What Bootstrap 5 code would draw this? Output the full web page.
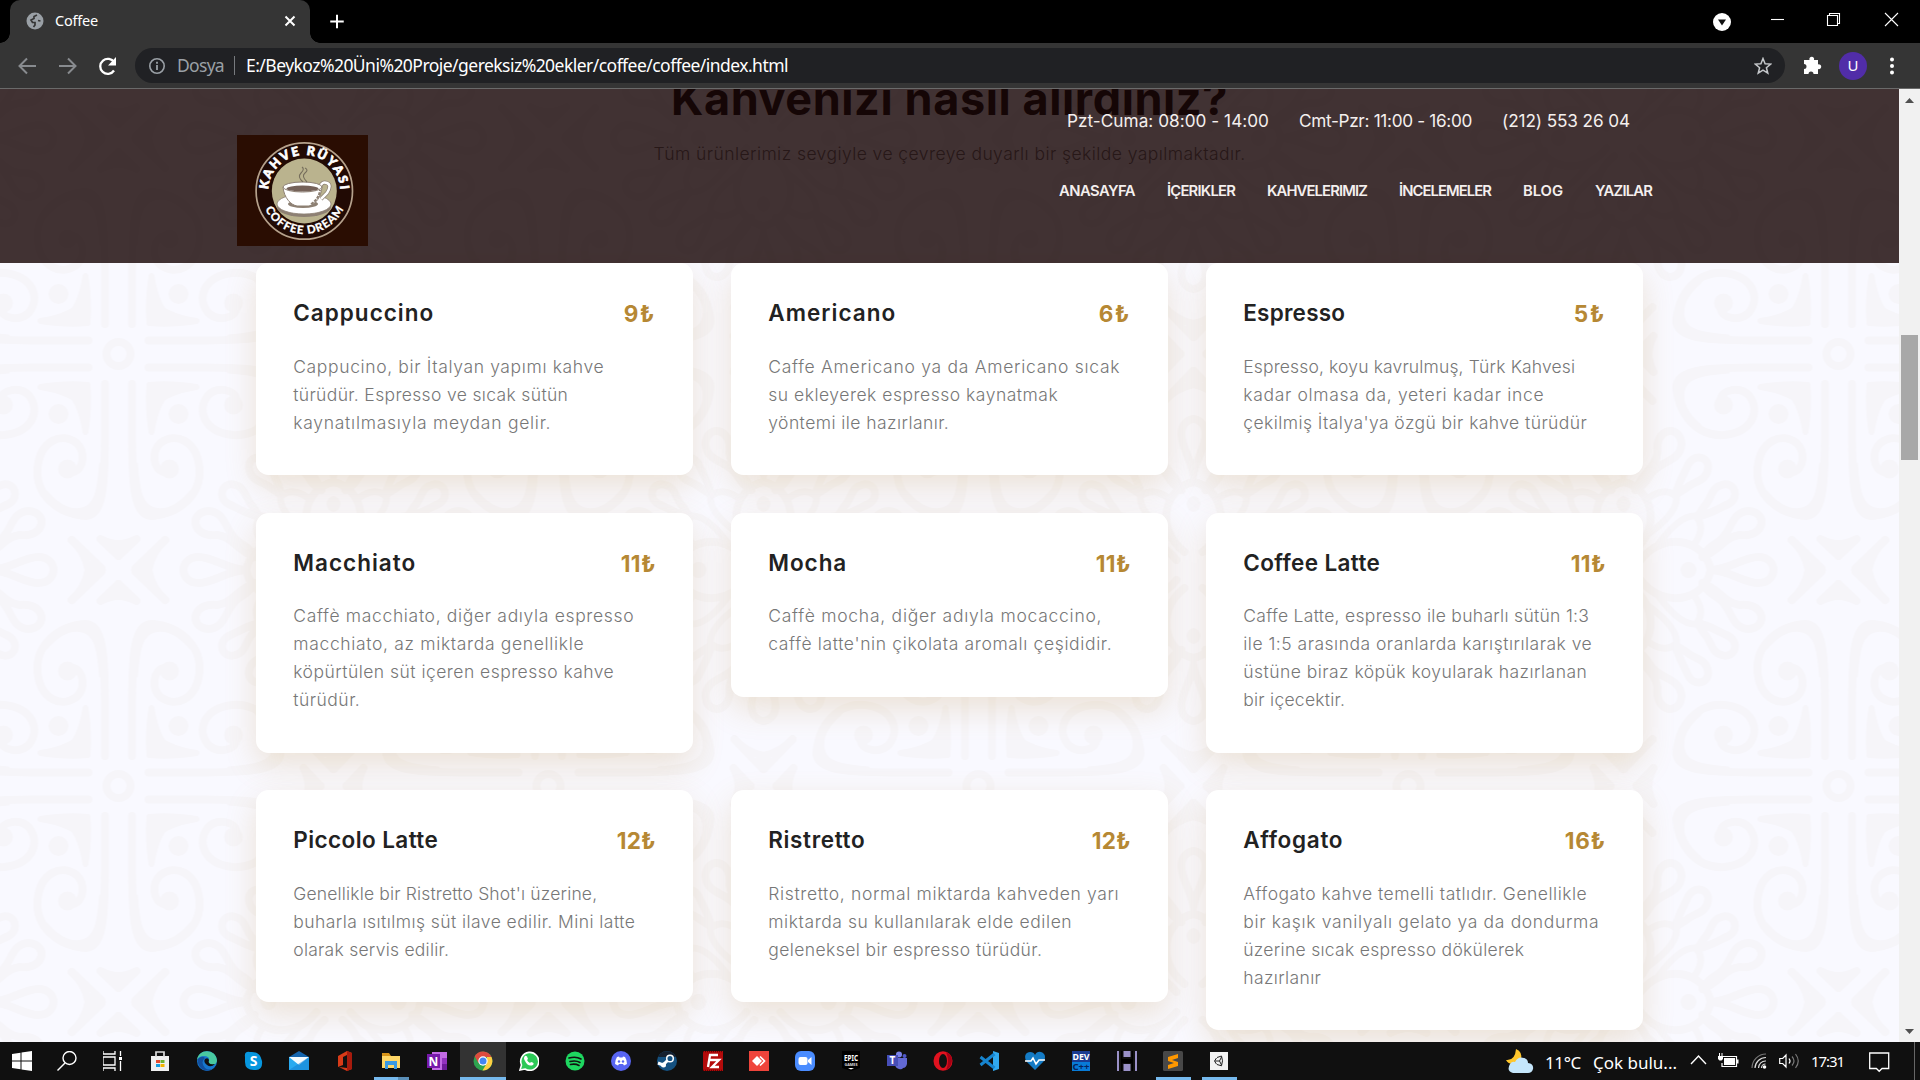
<!DOCTYPE html>
<html lang="tr">
<head>
<meta charset="utf-8">
<meta name="viewport" content="width=device-width, initial-scale=1">
<title>Coffee</title>
<link href="https://cdn.jsdelivr.net/npm/bootstrap@5.3.0/dist/css/bootstrap.min.css" rel="stylesheet">
<style>
body{width:1920px;height:1080px;overflow:hidden;background:#000;font-family:Inter,"Liberation Sans",sans-serif}
svg{display:block;flex:none}
.ui{font-family:"Noto Sans","Open Sans",sans-serif}
[data-w]{white-space:nowrap}
/* browser frame */
.tabstrip{height:43px;background:#000;padding-left:10px}
.tab-item{width:300px;height:43px;background:#353535;border-radius:10px 10px 0 0;padding:0 13px 2px 16px;position:relative}
.tab-item::before,.tab-item::after{content:"";position:absolute;bottom:0;width:10px;height:10px}
.tab-item::before{left:-10px;background:radial-gradient(circle at 0 0,#000 9.5px,#353535 10px)}
.tab-item::after{right:-10px;background:radial-gradient(circle at 100% 0,#000 9.5px,#353535 10px)}
.tab-name{font-size:14.5px;color:#fff;width:43px;margin-left:11px}
.toolbar{height:46px;background:#353535;border-bottom:1px solid #6a6a6a;padding:0 0 0 16px}
.address{width:1650px;height:35px;border-radius:18px;background:#202124;margin-left:18px;padding:0 13px 0 13px;font-size:17.5px}
.address .scheme{color:#9aa0a6;width:46px;margin-left:11px}
.address .bar{width:1px;height:19px;background:#777a7e;margin:0 11px 0 10px}
.avatar{width:28px;height:28px;border-radius:50%;background:#512da8;color:#fff;font-size:15px}
/* page viewport */
.viewport{height:953px}
.page{width:1899px;height:953px;background:#f9f9ff;position:relative;overflow:hidden}
.motif{position:absolute;left:0;top:0}
.site-header{position:absolute;left:0;top:0;width:100%;height:174px;background:rgba(19,0,0,.8);padding:0 237px;color:#f4efee}
.topline{font-size:17.2px;gap:30px;padding-right:32px;height:29px;margin-top:17px}
.menu-row{font-size:14.8px;font-weight:600;gap:32px;height:28px;margin-top:42px;padding-right:10px}
.logo{margin-top:46px}
.intro{position:relative;height:174px;padding-top:1px;text-align:center}
.intro h1{font-size:45px;font-weight:700;line-height:50px;color:#222;margin:-16px 0 0}
.intro p{font-size:17.5px;font-weight:300;line-height:28px;color:#777;margin:16px 0 0}
.menu-grid{position:relative;width:1425px;margin:0 auto;--bs-gutter-x:37.5px}
.drink{background:#fff;border-radius:12.5px;padding:37px 37.5px 38.5px;margin-bottom:37.5px;box-shadow:0 12px 32px rgba(184,134,52,.2)}
.drink .top{height:26.5px;margin-bottom:26px;color:#222}
.drink h4{font-size:22.5px;font-weight:600;line-height:26px;margin:0}
.drink .price{font-size:22.5px;font-weight:700;color:#b68834;line-height:27px}
.drink p{font-size:17.5px;font-weight:300;line-height:28px;color:#777;margin:0}
.drink p span{display:table}
.scroller{width:21px;background:#f1f1f1;padding:9px 0 8px}
.scroller .thumb{width:17px;height:125px;background:#a8a8a8;margin:0 auto}
/* taskbar */
.taskbar{height:38px;background:#101010;color:#fff}
.tb{width:46px;height:38px;position:relative}
.tb.sys{width:44px}
.tb.current{background:#333}
.tb.open::after,.tb.current::after{content:"";position:absolute;left:6px;bottom:0;width:35px;height:3px;background:#76b9ed}
.tb.current::after{left:0;width:46px}
.tb.multi::after{background:linear-gradient(90deg,#76b9ed 24px,#5a8fb8 24px)}
.tray{height:38px}
.tray span{font-size:17px}
.tray .clock{font-size:15px}
</style>
<script src="https://cdn.jsdelivr.net/npm/bootstrap@5.3.0/dist/js/bootstrap.bundle.min.js"></script>
</head>
<body class="d-flex flex-column">

<header class="ui flex-shrink-0">
  <div class="tabstrip d-flex align-items-center">
    <div class="tab-item d-flex align-items-center">
      <svg width="18" height="18" viewBox="0 0 18 18"><circle cx="9" cy="9" r="8.500" fill="#9aa0a6"/><path d="M11 3L8 4.500v2L5 8l1.500 2.500H9V13l-1.500 2M12 8.500l2.500.5" fill="none" stroke="#353535" stroke-width="1.700"/></svg>
      <span class="tab-name" data-w="43">Coffee</span>
      <svg class="ms-auto" width="14" height="14" viewBox="0 0 14 14"><path d="M2.500 2.500l9 9m0-9l-9 9" stroke="#fff" stroke-width="2"/></svg>
    </div>
    <svg class="ms-3" width="20" height="20" viewBox="0 0 20 20" style="padding-left:2px;margin-top:-1px;overflow:visible"><path d="M10 3v15M2.500 10.500h15" stroke="#fff" stroke-width="2.200"/></svg>
    <div class="ms-auto d-flex align-items-center">
      <svg width="18" height="18" viewBox="0 0 18 18" style="margin:0 40px 0 0"><circle cx="9" cy="9" r="9" fill="#fff"/><path d="M5 6.500h8l-4 6z" fill="#111"/></svg>
      <svg width="128" height="16" viewBox="0 0 128 16" style="margin:-6px 21px 0 0"><g fill="none" stroke="#fff" stroke-width="1.100"><path d="M0 8.500h13"/><path d="M56.500 4.500h10v10h-10zM58.500 4.500v-2h10v10h-2"/><path d="M114 2l13 13m0-13l-13 13"/></g></svg>
    </div>
  </div>
  <div class="toolbar d-flex align-items-center">
    <svg width="101" height="24" viewBox="0 0 101 24"><g fill="none" stroke="#888b8f" stroke-width="2"><path d="M20 12H4M11 4.500L3.500 12l7.500 7.500M43 12h16M52 4.500l7.500 7.500-7.500 7.500"/><path d="M98 16.500a7.500 7.500 0 1 1 .2-8" stroke="#fff" stroke-width="2.300"/></g><path d="M100 3v8.500h-8z" fill="#fff"/></svg>
    <div class="address d-flex align-items-center">
      <svg width="18" height="18" viewBox="0 0 18 18"><circle cx="9" cy="9" r="7.200" fill="none" stroke="#9aa0a6" stroke-width="1.600"/><path d="M9 8v5M9 4.800v2" stroke="#9aa0a6" stroke-width="1.800"/></svg>
      <span class="scheme" data-w="47">Dosya</span><span class="bar"></span>
      <span class="text-white" data-w="542">E:/Beykoz%20Üni%20Proje/gereksiz%20ekler/coffee/coffee/index.html</span>
      <svg class="ms-auto" width="18" height="18" viewBox="0 0 18 18"><path d="M9 1.500l2.100 5.200 5.600.4-4.300 3.600 1.400 5.500L9 13.200l-4.800 3 1.400-5.500L1.300 7.100l5.600-.4z" fill="none" stroke="#c4c7ca" stroke-width="1.500"/></svg>
    </div>
    <svg width="19" height="19" viewBox="0 0 19 19" style="margin-left:18px"><path d="M1 4h5.500a2.400 2.400 0 1 1 4.500 0H15v4.500a2.400 2.400 0 1 1 0 4.500v5h-4.500a2.500 2.500 0 0 0-5 0H1v-5a2.500 2.500 0 0 0 0-5z" fill="#fff"/></svg>
    <div class="avatar d-flex align-items-center justify-content-center" style="margin-left:17px">U</div>
    <svg width="6" height="18" viewBox="0 0 6 18" style="margin-left:22px"><g fill="#fff"><circle cx="3" cy="2.500" r="2"/><circle cx="3" cy="9" r="2"/><circle cx="3" cy="15.500" r="2"/></g></svg>
  </div>
</header>

<main class="viewport d-flex flex-shrink-0">
  <div class="page">
    <svg class="motif" width="1899" height="953">
      <defs>
        <g id="oct" fill="none" stroke="#f6f5f9" stroke-linecap="round" stroke-linejoin="round">
          <path d="M13.500 30V80C14 120 13 162 33 162C62 160 83 140 81 114C78 86 57 78 42 89C32 98 35 117 46 118" stroke-width="8"/>
          <path d="M15 110C14 158 25 168 40 163C55 159 66 150 72 138C60 152 48 158 36 155C24 152 20 140 18 110" fill="#f6f5f9" stroke-width="3"/>
          <circle cx="51" cy="115" r="9.500" fill="#f6f5f9" stroke="none"/>
          <path d="M33 78Q29 52 31 31L55 32Q38 45 33 78z" fill="#f6f5f9" stroke-width="6"/>
          <path d="M12 216L48 186Q20 203 31 216z" fill="#f6f5f9" stroke="none"/>
          <path d="M47 186Q33 198 30 216" stroke-width="8"/><path d="M46 185L16 214" stroke-width="6"/>
          <path d="M0 202L18 185Q8 190 0 190z" fill="#f6f5f9" stroke-width="8"/>
          <path d="M128 216C110 216 95 229 80 229C60 229 60 203 80 203C95 203 110 216 128 216" stroke-width="8"/>
          <path d="M136 203C118 196 114 183 99 181C73 184 70 158 90 157C109 158 106 180 122 189Q131 194 136 203" stroke-width="8"/>
          <path d="M141 163C128 160 119 154 110 150C98 143 104 127 117 131C128 134 127 145 134 152L141 163" stroke-width="8"/>
          <path d="M144 190C134 176 138 168 142 162Q158 160 180 190" stroke-width="7"/>
          <path d="M128 216C132 187 174 175 198 206" stroke-width="8"/><circle cx="150" cy="216" r="8" fill="#f6f5f9" stroke="none"/>
        </g>
        <g id="quarter"><use href="#oct"/><use href="#oct" transform="matrix(0 1 1 0 0 0)"/><circle cx="60" cy="60" r="10" fill="#f6f5f9"/></g>
        <g id="tile"><use href="#quarter"/><use href="#quarter" transform="scale(-1 1)"/><use href="#quarter" transform="scale(1 -1)"/><use href="#quarter" transform="scale(-1 -1)"/><circle r="12" fill="none" stroke="#f6f5f9" stroke-width="8"/></g>
        <pattern id="ornament" width="430" height="432" patternUnits="userSpaceOnUse" x="-96.500" y="49"><use href="#tile" transform="translate(215 216)"/></pattern>
      </defs>
      <rect width="1899" height="953" fill="url(#ornament)"/>
    </svg>

    <div class="intro"><h1><span data-w="557">Kahvenizi nasıl alırdınız?</span></h1><p><span data-w="592">Tüm ürünlerimiz sevgiyle ve çevreye duyarlı bir şekilde yapılmaktadır.</span></p></div>

    <div class="menu-grid row">
      <div class="col-4">
        <div class="drink"><div class="top d-flex justify-content-between"><h4><span data-w="141">Cappuccino</span></h4><span class="price" data-w="32">9₺</span></div>
          <p><span data-w="311">Cappucino, bir İtalyan yapımı kahve</span><span data-w="275">türüdür. Espresso ve sıcak sütün</span><span data-w="258">kaynatılmasıyla meydan gelir.</span></p></div>
        <div class="drink"><div class="top d-flex justify-content-between"><h4><span data-w="123">Macchiato</span></h4><span class="price" data-w="35">11₺</span></div>
          <p><span data-w="341">Caffè macchiato, diğer adıyla espresso</span><span data-w="291">macchiato, az miktarda genellikle</span><span data-w="321">köpürtülen süt içeren espresso kahve</span><span data-w="67">türüdür.</span></p></div>
        <div class="drink"><div class="top d-flex justify-content-between"><h4><span data-w="145">Piccolo Latte</span></h4><span class="price" data-w="39">12₺</span></div>
          <p><span data-w="304">Genellikle bir Ristretto Shot'ı üzerine,</span><span data-w="342">buharla ısıtılmış süt ilave edilir. Mini latte</span><span data-w="156">olarak servis edilir.</span></p></div>
      </div>
      <div class="col-4">
        <div class="drink"><div class="top d-flex justify-content-between"><h4><span data-w="128">Americano</span></h4><span class="price" data-w="32">6₺</span></div>
          <p><span data-w="352">Caffe Americano ya da Americano sıcak</span><span data-w="290">su ekleyerek espresso kaynatmak</span><span data-w="181">yöntemi ile hazırlanır.</span></p></div>
        <div class="drink"><div class="top d-flex justify-content-between"><h4><span data-w="79">Mocha</span></h4><span class="price" data-w="35">11₺</span></div>
          <p><span data-w="334">Caffè mocha, diğer adıyla mocaccino,</span><span data-w="344">caffè latte'nin çikolata aromalı çeşididir.</span></p></div>
        <div style="height:56px"></div>
        <div class="drink"><div class="top d-flex justify-content-between"><h4><span data-w="97">Ristretto</span></h4><span class="price" data-w="39">12₺</span></div>
          <p><span data-w="351">Ristretto, normal miktarda kahveden yarı</span><span data-w="304">miktarda su kullanılarak elde edilen</span><span data-w="274">geleneksel bir espresso türüdür.</span></p></div>
      </div>
      <div class="col-4">
        <div class="drink"><div class="top d-flex justify-content-between"><h4><span data-w="102">Espresso</span></h4><span class="price" data-w="32">5₺</span></div>
          <p><span data-w="332">Espresso, koyu kavrulmuş, Türk Kahvesi</span><span data-w="301">kadar olmasa da, yeteri kadar ince</span><span data-w="344">çekilmiş İtalya'ya özgü bir kahve türüdür</span></p></div>
        <div class="drink"><div class="top d-flex justify-content-between"><h4><span data-w="137">Coffee Latte</span></h4><span class="price" data-w="35">11₺</span></div>
          <p><span data-w="346">Caffe Latte, espresso ile buharlı sütün 1:3</span><span data-w="349">ile 1:5 arasında oranlarda karıştırılarak ve</span><span data-w="344">üstüne biraz köpük koyularak hazırlanan</span><span data-w="102">bir içecektir.</span></p></div>
        <div class="drink"><div class="top d-flex justify-content-between"><h4><span data-w="100">Affogato</span></h4><span class="price" data-w="41">16₺</span></div>
          <p><span data-w="344">Affogato kahve temelli tatlıdır. Genellikle</span><span data-w="356">bir kaşık vanilyalı gelato ya da dondurma</span><span data-w="281">üzerine sıcak espresso dökülerek</span><span data-w="78">hazırlanır</span></p></div>
      </div>
    </div>

    <div class="site-header d-flex justify-content-between">
      <svg class="logo" width="131" height="111" viewBox="0 0 131 111">
        <defs><path id="arcTop" d="M31.300 56a36 36 0 0 1 72 0"/><path id="arcBottom" d="M24.300 56a43 43 0 0 0 86 0"/></defs>
        <rect width="131" height="111" fill="#2a0d02"/>
        <circle cx="67.300" cy="56" r="48.200" fill="#210a04" stroke="#b5a18c" stroke-width="1.700"/>
        <circle cx="67.300" cy="56" r="32.500" fill="#bab38e"/>
        <g font-family="Lato, sans-serif" font-weight="900" fill="#fff" stroke="#fff" text-anchor="middle">
          <text font-size="12.500" stroke-width=".7" textLength="110"><textPath href="#arcTop" startOffset="50%" textLength="110">KAHVE RÜYASI</textPath></text>
          <text font-size="11.500" stroke-width=".2" textLength="98"><textPath href="#arcBottom" startOffset="50%" textLength="98">COFFEE DREAM</textPath></text>
        </g>
        <ellipse cx="67" cy="72" rx="27" ry="10" fill="#8d8073"/><ellipse cx="67" cy="69" rx="27" ry="10" fill="#fff" stroke="#8d8073" stroke-width=".8"/>
        <ellipse cx="66" cy="69" rx="15" ry="4" fill="#8d8073"/>
        <path d="M83 52q2-6 7-4t0 10l-6 6" fill="none" stroke="#8d8073" stroke-width="4"/><path d="M83 52q2-6 7-4t0 10l-6 6" fill="none" stroke="#fff" stroke-width="2.500"/>
        <path d="M46 52c1 11 8 18 14 19h12c7-2 12-9 13-19z" fill="#fff" stroke="#8d8073"/>
        <path d="M74 69q8-5 9-14" fill="none" stroke="#8d8073" stroke-width="2" stroke-dasharray="3 1"/>
        <ellipse cx="65.500" cy="52" rx="19.500" ry="5" fill="#fff" stroke="#8d8073"/><ellipse cx="65.500" cy="53.500" rx="16" ry="3" fill="#756259"/>
        <path d="M66 47q-6-5-2-9t1-6M70 47q-6-6-2-9t0-5" fill="none" stroke="#766e5c" stroke-width="1.100"/>
      </svg>
      <div>
        <div class="topline d-flex justify-content-end align-items-center"><span data-w="202">Pzt-Cuma: 08:00 - 14:00</span><span data-w="173">Cmt-Pzr: 11:00 - 16:00</span><span data-w="128">(212) 553 26 04</span></div>
        <nav class="menu-row d-flex justify-content-end align-items-center"><span data-w="76">ANASAYFA</span><span data-w="68">İÇERIKLER</span><span data-w="100">KAHVELERIMIZ</span><span data-w="92">İNCELEMELER</span><span data-w="40">BLOG</span><span data-w="57">YAZILAR</span></nav>
      </div>
    </div>
  </div>
  <div class="scroller d-flex flex-column">
    <svg class="mx-auto" width="9" height="5" viewBox="0 0 9 5"><path d="M0 5l4.500-5L9 5z" fill="#505050"/></svg>
    <div class="thumb" style="margin-top:232px"></div>
    <svg class="mx-auto mt-auto" width="9" height="5" viewBox="0 0 9 5"><path d="M0 0l4.500 5L9 0z" fill="#505050"/></svg>
  </div>
</main>

<footer class="taskbar ui d-flex flex-shrink-0">
  <div class="d-flex" id="apps">
    <div class="tb sys"><svg viewBox="0 0 20 20"><path d="M0 3l8.500-1.200V9.500H0zM9.500 1.600L20 0v9.500H9.500zM0 10.500h8.500v7.800L0 17zM9.500 10.500H20V20L9.500 18.400z" fill="#fff"/></svg></div>
    <div class="tb"><svg viewBox="0 0 20 20"><g fill="none" stroke="#fff" stroke-width="1.400"><circle cx="12.500" cy="7" r="6.500"/><path d="M8 12L.5 19.500"/></g></svg></div>
    <div class="tb"><svg viewBox="0 0 20 20"><g fill="none" stroke="#fff" stroke-width="1.300"><path d="M0 0v3h12V0M0 6h12v8H0zM0 20v-3h12v3M17.500 0v5M17.500 10v10"/></g><path d="M16 6h3v3h-3z" fill="#fff"/></svg></div>
    <div class="tb" style="width:48px"><svg viewBox="0 0 20 20"><path d="M1 5h18v15H1z" fill="#f0f0f0"/><path d="M6 6V1h8v5" fill="none" stroke="#ddd" stroke-width="1.700"/><path d="M6 9h4v3H6z" fill="#e64a2e"/><path d="M10.500 9h4v3h-4z" fill="#6eb332"/><path d="M6 13h4v3H6z" fill="#159de0"/><path d="M10.500 13h4v3h-4z" fill="#f4b400"/></svg></div>
    <div class="tb"><svg viewBox="0 0 20 20"><circle cx="10" cy="10" r="10" fill="#1677cf"/><path d="M0 9C1-2 18-3 20 9q0 5-6 5-4-1-2-4 1-5-5-5-5 0-7 4z" fill="#49c9a0"/><path d="M1 8q4-4 7-1-5 4 0 10 4 3 9 0-6 5-12 1Q0 14 1 8z" fill="#124f9d"/><path d="M8 8q3-2 4 1-2 5 6 4-4 4-8 1t-2-6z" fill="#111"/></svg></div>
    <div class="tb"><svg viewBox="0 0 20 20"><path d="M2 6Q1 0 7 1q10-1 12 9 1 9-6 9Q2 20 2 11z" fill="#0797df"/><text x="10.500" y="15" text-anchor="middle" font-size="14" font-weight="700" fill="#fff">S</text></svg></div>
    <div class="tb"><svg viewBox="0 0 20 20"><path d="M0 6l10-6 10 6z" fill="#1464ad"/><path d="M0 6h20v13H0z" fill="#29aaf0"/><path d="M0 6h20L10 14z" fill="#f4fbff"/><path d="M0 19L20 6v13z" fill="#147fd3" opacity=".55"/></svg></div>
    <div class="tb"><svg viewBox="0 0 20 20"><path d="M3 5l9-5 5 2v16l-5 2-8-4 8 1V4L8 6v8l-5 2z" fill="#d83b18"/><path d="M12 0l5 2v16l-5 2z" fill="#a71b0d"/></svg></div>
    <div class="tb open multi"><svg viewBox="0 0 20 20"><path d="M1 2h7l2 3H1z" fill="#d79419"/><path d="M1 5h18v12H1z" fill="#ffd767"/><path d="M4 18v-8h12v8h-3v-4H7v4z" fill="#3a9ae3"/></svg></div>
    <div class="tb"><svg viewBox="0 0 20 20"><path d="M5 1h15v18H5z" fill="#c36be5"/><path d="M15 7h5v6h-5z" fill="#9332bf"/><path d="M15 13h5v6h-5z" fill="#6e1b9a"/><path d="M0 3h13v14H0z" fill="#7719aa"/><text x="6.500" y="14.500" text-anchor="middle" font-size="12" font-weight="700" fill="#fff">N</text></svg></div>
    <div class="tb current"><svg viewBox="0 0 20 20"><circle cx="10" cy="10" r="9.500" fill="#2ea44f"/><path d="M1.700 5.200A9.500 9.500 0 0 1 18.500 6H10l-4.500 6z" fill="#dd4b3e"/><path d="M18.500 6A9.500 9.500 0 0 1 9.500 19.500L14 12V6z" fill="#ffce43"/><circle cx="10" cy="10" r="4.700" fill="#fff"/><circle cx="10" cy="10" r="3.500" fill="#4285f4"/></svg></div>
    <div class="tb"><svg viewBox="0 0 20 20"><path d="M1 19l1.500-5A9 9 0 1 1 6 18z" fill="#2cc957" stroke="#fff" stroke-width="1.600"/><path d="M6 5q2-1 3 3l-1 1q1 2 3 3l1-1q4 1 2 3-5 2-8-4-2-3 0-5z" fill="#fff"/></svg></div>
    <div class="tb"><svg viewBox="0 0 20 20"><circle cx="10" cy="10" r="9.500" fill="#1ed760"/><path d="M4 7q7-2 12 1M5 10.500q6-1.500 10 1M5.500 13.500q5-1 8.500 1" fill="none" stroke="#111" stroke-width="1.600" stroke-linecap="round"/></svg></div>
    <div class="tb"><svg viewBox="0 0 20 20"><circle cx="10" cy="10" r="10" fill="#5865f2"/><path d="M6 6l2-.5.500 1h3l.500-1L14 6q2 3 2 7l-3 1.500-1-1.500H8l-1 1.500L4 13q0-4 2-7z" fill="#fff"/><circle cx="8" cy="10.500" r="1.200" fill="#5865f2"/><circle cx="12" cy="10.500" r="1.200" fill="#5865f2"/></svg></div>
    <div class="tb"><svg viewBox="0 0 20 20"><circle cx="10" cy="10" r="10" fill="#155180"/><path d="M1 6A10 10 0 0 1 19 6z" fill="#15202f"/><path d="M1 12l5 2 6-6" stroke="#fff" stroke-width="3" fill="none"/><circle cx="13" cy="7.500" r="3.300" fill="#155180" stroke="#fff" stroke-width="1.500"/><circle cx="6.500" cy="14" r="2.500" fill="#fff"/></svg></div>
    <div class="tb"><svg viewBox="0 0 20 20"><path d="M0 0h20v20H0z" fill="#b40b0b"/><path d="M0 .7h20M0 19.300h20" stroke="#500" stroke-dasharray="1 1"/><path d="M5 16L7 4h8M6 9h6M9 9h7l-7 7h7" fill="none" stroke="#fff" stroke-width="2.300"/></svg></div>
    <div class="tb"><svg viewBox="0 0 20 20"><path d="M0 0h20v20H0z" fill="#ef443b"/><path d="M8 5l5 5-5 5-5-5z" fill="#fff"/><path d="M11 5.500l4.500 4.500-4.500 4.500" fill="none" stroke="#fff" stroke-width="1.700"/></svg></div>
    <div class="tb"><svg viewBox="0 0 20 20"><rect width="20" height="20" rx="6" fill="#4a8cff"/><rect x="3.500" y="6" width="9" height="8" rx="2" fill="#fff"/><path d="M13 9l3.500-3v8L13 11z" fill="#fff"/></svg></div>
    <div class="tb"><svg viewBox="0 0 20 20"><path d="M1 0h18v17l-9 3-9-3z" fill="#000"/><text x="10" y="9.500" text-anchor="middle" font-size="9" textLength="14" lengthAdjust="spacingAndGlyphs" font-weight="700" fill="#fff">EPIC</text><text x="10" y="15" text-anchor="middle" font-size="4" textLength="13" lengthAdjust="spacingAndGlyphs" font-weight="700" fill="#ddd">GAMES</text><path d="M7 17h6l-3 1.500z" fill="#fff"/></svg></div>
    <div class="tb"><svg viewBox="0 0 20 20"><circle cx="12" cy="3.500" r="3" fill="#7b83eb"/><circle cx="17.500" cy="5" r="2" fill="#5059c9"/><path d="M8 7h12v6q-1 4-4 4-1 2-4 1-4-1-4-5z" fill="#6269d4"/><path d="M0 4h11v11H0z" fill="#464eb8"/><text x="5.500" y="13" text-anchor="middle" font-size="10" font-weight="700" fill="#fff">T</text></svg></div>
    <div class="tb"><svg viewBox="0 0 20 20"><ellipse cx="10" cy="10" rx="9.500" ry="9.800" fill="#e1121f"/><path d="M13 1q6 2 6 9-1 7-6 9 4-9 0-18z" fill="#a70014"/><ellipse cx="10" cy="10" rx="4" ry="7" fill="#111"/></svg></div>
    <div class="tb"><svg viewBox="0 0 20 20"><path d="M14 0l6 2v16l-6 2z" fill="#31a8ee"/><path d="M15.500 3L1.500 14M15.500 17L1.500 6" stroke="#1684cf" stroke-width="3"/></svg></div>
    <div class="tb"><svg viewBox="0 0 20 20"><path d="M10 19L1 10Q-2 2 5 1q4 0 5 3 2-4 6-3 6 2 3 9z" fill="#147bc5"/><path d="M0 10h6l2-3 3 6 3-4h6" fill="none" stroke="#fff" stroke-width="1.600"/></svg></div>
    <div class="tb"><svg viewBox="0 0 20 20"><path d="M1 0h18v20H1z" fill="#193c91"/><path d="M1 11h18v9H1z" fill="#087bd7"/><text x="10" y="9" text-anchor="middle" font-size="8.500" textLength="17" lengthAdjust="spacingAndGlyphs" font-weight="700" fill="#fff">DEV</text><text x="10" y="18.500" text-anchor="middle" font-size="9" textLength="17" lengthAdjust="spacingAndGlyphs" font-weight="700" fill="#06245c">C++</text></svg></div>
    <div class="tb"><svg viewBox="0 0 20 20"><path d="M0 0h2v20H0zM18 0h2v20h-2zM6.500 0h7v6h-7zM6.500 13h7v7h-7z" fill="#9a91c8"/><path d="M4 0h1.500v8h9V0H16v20h-1.500v-8h-9v8H4z" fill="#000"/></svg></div>
    <div class="tb open"><svg viewBox="0 0 20 20"><rect width="20" height="20" rx="1.500" fill="#484848"/><path d="M15 3v4l-6 2 6 2v4l-10 3v-4l6-2-6-2V6z" fill="#ff9800"/></svg></div>
    <div class="tb open"><svg viewBox="0 0 20 20"><path d="M1 1h18v18H1z" fill="#f2f2f2"/><path d="M8 6.500l4.500-1.500 1 4.800-1 5L8 13.500M7.500 7L5.500 10l2 3.200M6 10h4.500l2-4M10.500 10l2 4" fill="none" stroke="#222" stroke-width="1"/></svg></div>
  </div>
  <div class="tray d-flex align-items-center ms-auto">
    <svg width="28" height="25" viewBox="0 0 28 25"><path d="M10 0q7 3 5 11L7 15q-5 0-7-4 9 1 10-11z" fill="#ffc62b"/><path d="M7 24q-7-2-3-9 2-3 5-2 3-6 9-4 4 1 4 5 6 1 5 6-1 4-5 4z" fill="#c5e6fb"/></svg>
    <span data-w="36" style="margin-left:11px;padding-top:3px">11°C</span><span data-w="84" style="margin-left:12px;padding-top:3px">Çok bulu...</span>
    <svg width="17" height="12" viewBox="0 0 17 12" style="margin:-3px 0 0 13px"><path d="M1 10l7.500-8L16 10" fill="none" stroke="#fff" stroke-width="1.400"/></svg>
    <svg width="21" height="16" viewBox="0 0 21 16" style="margin:-1px 0 0 11px"><path d="M4 3.500h14.500v10H4V10" fill="none" stroke="#fff" stroke-width="1.200"/><path d="M6 5h11v7H6zM18.500 6.500h2v4h-2zM0 3h5v3L3.500 7.500h-2L0 6zM1 0h1v3H1zM3.500 0h1v3h-1z" fill="#fff"/></svg>
    <svg width="16" height="16" viewBox="0 0 16 16" style="margin-left:12px"><g fill="none" stroke-width="1.200"><path d="M1 15A14 14 0 0 1 15 1" stroke="#777"/><path d="M4 15A11 11 0 0 1 15 4.500M7.500 15a7 7 0 0 1 7.500-7M10.500 15a4 4 0 0 1 4-4" stroke="#ddd"/></g><circle cx="13.500" cy="14" r="1.800" fill="#fff"/></svg>
    <svg width="21" height="16" viewBox="0 0 21 16" style="margin-left:12px"><path d="M.7 5.500h3L7 2v12l-3.300-3.500h-3zM10 5.500q2 2.500 0 5" fill="none" stroke="#fff" stroke-width="1.200"/><path d="M13 3.500q4 4.500 0 9M16.500 1q5.500 7 0 14" fill="none" stroke="#777" stroke-width="1.200"/></svg>
    <span class="clock" data-w="33" style="margin-left:11px">17:31</span>
    <svg width="21" height="21" viewBox="0 0 21 21" style="margin:3px 0 0 25px"><path d="M.7 1h19v15.500H13l-2.800 2.800-2.800-2.800H.7z" fill="none" stroke="#fff" stroke-width="1.300"/></svg>
    <div style="width:1px;height:38px;background:#666;margin:0 5px 0 24px"></div>
  </div>
</footer>

<script>
// Center every launcher icon in its slot
document.querySelectorAll('#apps .tb').forEach(b => {
  b.classList.add('d-flex', 'align-items-center', 'justify-content-center');
  const s = b.firstElementChild;
  s.setAttribute('width', 20); s.setAttribute('height', 20);
});
document.querySelectorAll('[data-w]').forEach(e => {
  if (getComputedStyle(e).display === 'inline') e.style.display = 'inline-block';
  e.style.width = 'max-content';
  const n = [...e.textContent].length, w = +e.dataset.w;
  const gap = (w - e.getBoundingClientRect().width) / n;
  e.style.letterSpacing = gap + 'px';
  e.style.width = w + 'px';
});
</script>
</body>
</html>
